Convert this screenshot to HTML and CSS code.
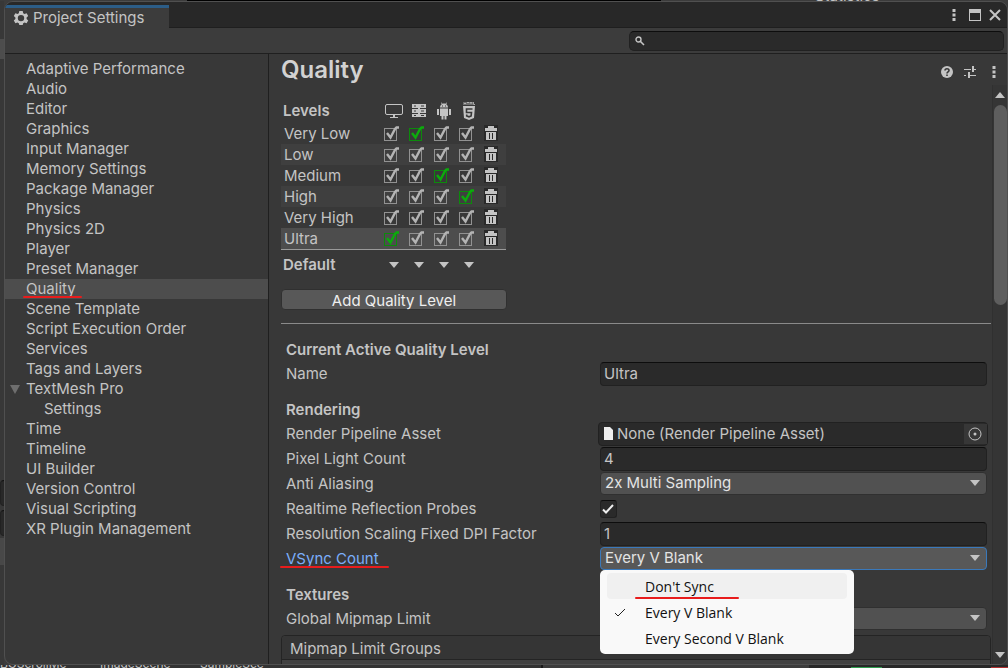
FILE: index.html
```html
<!DOCTYPE html>
<html lang="en">
<head>
    <meta charset="UTF-8">
    <meta name="viewport" content="width=device-width, initial-scale=1.0">
    <title>Project Settings</title>
    <link rel="stylesheet" href="styles.css">
</head>
<body>

    <!-- shared icons -->
    <svg class="sprite">
        <symbol id="dots" viewBox="0 0 14 14">
            <path d="M5.500 1h3v3h-3zM5.500 5.500h3v3h-3zM5.500 10h3v3h-3z"/>
        </symbol>
        <symbol id="tick" viewBox="0 0 18 18">
            <path d="M5 8l3.500 4.500L13 4l1.500-1.500H17" fill="none" stroke="currentColor" stroke-width="2.400"/>
        </symbol>
        <symbol id="trash" viewBox="0 0 14 16">
            <path d="M4 1h6v2h3v3H1V3h3z"/>
            <path fill-rule="evenodd" d="M2 7h10v8H2zM5 8v6h1V8zM8 8v6h1V8z"/>
        </symbol>
    </svg>

    <div class="behind-top">
        <span class="dark"></span>
        <span class="stats">Statistics</span>
    </div>

    <div class="desk">
        <div class="behind-left">
            <span class="patch light"></span>
            <span class="patch field"></span>
            <span class="patch field"></span>
            <span class="patch light last"></span>
        </div>

        <div class="window">
            <header class="tabbar">
                <div class="tab">
                    <svg width="16" height="16" viewBox="0 0 16 16">
                        <path fill="#c4c4c4" fill-rule="evenodd" d="M6.300 1h3.400l.5 2.200 1.300.7 2.100-.6 1.600 2.800-1.600 1.500v1.300l1.600 1.500-1.600 2.800-2.100-.7-1.300.8L9.700 15H6.300l-.5-1.700-1.300-.8-2.100.7-1.600-2.800 1.600-1.500V7.600L.8 6.100l1.600-2.800 2.100.6 1.300-.7zM8 4.900a3.200 3.200 0 1 0 0 6.400 3.200 3.200 0 0 0 0-6.400z"/>
                    </svg>
                    <span>Project Settings</span>
                </div>
                <div class="window-buttons">
                    <button aria-label="Window menu"><svg width="14" height="14"><use href="#dots"/></svg></button>
                    <button aria-label="Maximize">
                        <svg width="12" height="12" viewBox="0 0 12 12"><path d="M0 0h12v12H0zM1 4v7h10V4z" fill-rule="evenodd"/></svg>
                    </button>
                    <button aria-label="Close">
                        <svg width="12" height="12" viewBox="0 0 12 12"><path d="M1 1l10 10M11 1L1 11" stroke="currentColor" stroke-width="2"/></svg>
                    </button>
                </div>
            </header>

            <div class="toolbar">
                <label class="search">
                    <svg width="10" height="10" viewBox="0 0 10 10">
                        <circle cx="3.500" cy="3.500" r="2.500" fill="none" stroke="#c4c4c4" stroke-width="1.400"/>
                        <path d="M5.500 5.500L9 9" stroke="#c4c4c4" stroke-width="1.600"/>
                    </svg>
                    <input type="text" aria-label="Search">
                </label>
            </div>

            <div class="content">
                <nav class="sidebar">
                    <a href="#">Adaptive Performance</a>
                    <a href="#">Audio</a>
                    <a href="#">Editor</a>
                    <a href="#">Graphics</a>
                    <a href="#">Input Manager</a>
                    <a href="#">Memory Settings</a>
                    <a href="#">Package Manager</a>
                    <a href="#">Physics</a>
                    <a href="#">Physics 2D</a>
                    <a href="#">Player</a>
                    <a href="#">Preset Manager</a>
                    <a href="#" class="selected"><span class="marked">Quality</span></a>
                    <a href="#">Scene Template</a>
                    <a href="#">Script Execution Order</a>
                    <a href="#">Services</a>
                    <a href="#">Tags and Layers</a>
                    <a href="#" class="parent">TextMesh Pro</a>
                    <a href="#" class="child">Settings</a>
                    <a href="#">Time</a>
                    <a href="#">Timeline</a>
                    <a href="#">UI Builder</a>
                    <a href="#">Version Control</a>
                    <a href="#">Visual Scripting</a>
                    <a href="#">XR Plugin Management</a>
                </nav>

                <main class="main">
                    <div class="page-head">
                        <h1>Quality</h1>
                        <div class="head-buttons">
                            <button aria-label="Help">
                                <svg width="12" height="12" viewBox="0 0 12 12">
                                    <circle cx="6" cy="6" r="6"/>
                                    <path d="M4 4.600C4 2.200 8 2.200 8 4.500 8 6 6 5.800 6 7.500M6 8.500V10" fill="none" stroke="#383838" stroke-width="1.600"/>
                                </svg>
                            </button>
                            <button aria-label="Presets">
                                <svg width="12" height="12" viewBox="0 0 12 12">
                                    <path d="M0 3h7v1H0zM8 0h2v6H8zM10 3h2v1h-2zM0 9h2v1H0zM4 6h2v6H4zM6 9h6v1H6z"/>
                                </svg>
                            </button>
                            <button aria-label="More"><svg width="14" height="14"><use href="#dots"/></svg></button>
                        </div>
                    </div>

                    <div class="scroll">
                        <div class="page">
                            <table class="levels">
                                <thead>
                                    <tr>
                                        <th class="name">Levels</th>
                                        <th>
                                            <svg width="18" height="16" viewBox="0 0 18 16" aria-label="Desktop">
                                                <rect x="0.500" y="1.500" width="17" height="10" rx="1.500" fill="none" stroke="#c4c4c4"/>
                                                <path d="M8 12h2v2h3v1H5v-1h3z"/>
                                            </svg>
                                        </th>
                                        <th>
                                            <svg width="16" height="16" viewBox="0 0 16 16" aria-label="Server">
                                                <path fill-rule="evenodd" d="M1 1h14v4H1zM3 2.500v1h2v-1zM10 2.500v1h3v-1zM1 6h14v4H1zM3 7.500v1h2v-1zM10 7.500v1h3v-1zM1 11h14v3H1zM3 12v1h2v-1zM10 12v1h3v-1zM7 5h2v1H7zM7 10h2v1H7z"/>
                                            </svg>
                                        </th>
                                        <th>
                                            <svg width="16" height="18" viewBox="0 0 16 18" aria-label="Android">
                                                <path d="M4 5.500C4 3.800 4.900 2.700 5.800 2.200L5 .7l.6-.3.9 1.400c1-.3 2-.3 3 0l.9-1.400.6.3-.8 1.500c.9.500 1.800 1.600 1.800 3.300zM4 6.500h8V14h-1.500v3.500h-2V14h-1v3.500h-2V14H4zM1 7h2v6H1zM13 7h2v6h-2z"/>
                                                <path d="M6 3.500h1v1H6zM9 3.500h1v1H9z" fill="#383838"/>
                                            </svg>
                                        </th>
                                        <th>
                                            <svg width="14" height="18" viewBox="0 0 14 18" aria-label="WebGL">
                                                <path d="M2 0v3M4 0v3M2 1.500h2M5 .5h2M6 0v3M8 3V0l1 1.500L10 0v3M11.500 0v2.500H13" fill="none" stroke="#c4c4c4" stroke-width="0.800"/>
                                                <path d="M1 4h12l-1 12-5 2-5-2z"/>
                                                <path d="M10.500 7h-6v3.500h5l-.4 3.500-2.100.8-2.300-.8V12.500" fill="none" stroke="#383838" stroke-width="1.600"/>
                                            </svg>
                                        </th>
                                        <th></th>
                                    </tr>
                                </thead>
                                <tbody id="levelRows"></tbody>
                                <tfoot>
                                    <tr>
                                        <th class="name">Default</th>
                                        <th><button class="drop" aria-label="Desktop default"></button></th>
                                        <th><button class="drop" aria-label="Server default"></button></th>
                                        <th><button class="drop" aria-label="Android default"></button></th>
                                        <th><button class="drop" aria-label="WebGL default"></button></th>
                                        <th></th>
                                    </tr>
                                </tfoot>
                            </table>

                            <button class="add">Add Quality Level</button>
                            <hr>

                            <form class="form">
                                <h2>Current Active Quality Level</h2>
                                <div class="row">
                                    <label for="name">Name</label>
                                    <input type="text" class="field" id="name" value="Ultra">
                                </div>

                                <h2>Rendering</h2>
                                <div class="row">
                                    <label for="asset">Render Pipeline Asset</label>
                                    <div class="object">
                                        <svg width="9" height="13" viewBox="0 0 9 13"><path fill="#eee" d="M0 0h6l3 3v10H0z"/></svg>
                                        <input type="text" id="asset" value="None (Render Pipeline Asset)" readonly>
                                        <button type="button" class="pick" aria-label="Select asset">
                                            <svg width="14" height="14" viewBox="0 0 14 14">
                                                <circle cx="7" cy="7" r="6" fill="none" stroke="#c4c4c4"/>
                                                <circle cx="7" cy="7" r="1.500"/>
                                            </svg>
                                        </button>
                                    </div>
                                </div>
                                <div class="row">
                                    <label for="lights">Pixel Light Count</label>
                                    <input type="text" class="field" id="lights" value="4">
                                </div>
                                <div class="row">
                                    <label for="aa">Anti Aliasing</label>
                                    <div class="select">
                                        <select id="aa"><option>2x Multi Sampling</option></select>
                                    </div>
                                </div>
                                <div class="row">
                                    <label for="probes">Realtime Reflection Probes</label>
                                    <span class="check">
                                        <input type="checkbox" id="probes" checked>
                                        <svg width="12" height="12" viewBox="0 0 12 12"><path d="M1 6.500l3 3L11 2" fill="none" stroke="#eee" stroke-width="2"/></svg>
                                    </span>
                                </div>
                                <div class="row">
                                    <label for="dpi">Resolution Scaling Fixed DPI Factor</label>
                                    <input type="text" class="field" id="dpi" value="1">
                                </div>
                                <div class="row">
                                    <label for="vsync" class="active"><span class="marked">VSync Count</span></label>
                                    <div class="select open">
                                        <select id="vsync">
                                            <option>Don't Sync</option>
                                            <option selected>Every V Blank</option>
                                            <option>Every Second V Blank</option>
                                        </select>
                                        <div class="menu">
                                            <button type="button" class="hover"><span class="marked">Don't Sync</span></button>
                                            <button type="button">
                                                <svg width="12" height="10" viewBox="0 0 12 10"><path d="M1 5l3 3 7-7" fill="none" stroke="#222"/></svg>
                                                Every V Blank
                                            </button>
                                            <button type="button">Every Second V Blank</button>
                                        </div>
                                    </div>
                                </div>

                                <h2>Textures</h2>
                                <div class="row">
                                    <label for="mipmap">Global Mipmap Limit</label>
                                    <div class="select">
                                        <select id="mipmap"><option></option></select>
                                    </div>
                                </div>
                            </form>

                            <div class="group">
                                <div class="group-title">Mipmap Limit Groups</div>
                            </div>
                        </div>

                        <div class="scrollbar">
                            <span class="arrow up"></span>
                            <div class="track"><div class="thumb"></div></div>
                            <span class="arrow"></span>
                        </div>
                    </div>
                </main>
            </div>
        </div>
    </div>

    <div class="behind-bottom">
        <div class="assets">
            <span>BGScrollMe</span>
            <span>ImageScene</span>
            <span>SampleSce</span>
        </div>
        <div class="strip"></div>
        <div class="timeline"><i class="green"></i><i class="red"></i></div>
    </div>

    <script>
        // "def" is the platform column that uses the level by default
        const levels = [
            { name: 'Very Low', def: 1 },
            { name: 'Low', def: -1 },
            { name: 'Medium', def: 2 },
            { name: 'High', def: 3 },
            { name: 'Very High', def: -1 },
            { name: 'Ultra', def: 0 }
        ];
        const platforms = ['Desktop', 'Server', 'Android', 'WebGL'];

        document.getElementById('levelRows').innerHTML = levels.map(level => {
            const ticks = platforms.map((platform, i) => `
                <td><label class="tick ${level.def === i ? 'default' : ''}">
                    <input type="checkbox" checked aria-label="${level.name} on ${platform}">
                    <svg width="18" height="18"><use href="#tick"/></svg>
                </label></td>`).join('');
            return `<tr class="${level.name === 'Ultra' ? 'current' : ''}">
                <td class="name">${level.name}</td>${ticks}
                <td><button class="trash" aria-label="Delete ${level.name}"><svg width="14" height="16"><use href="#trash"/></svg></button></td>
            </tr>`;
        }).join('');
    </script>
</body>
</html>
```
FILE: styles.css
```css
* {
    padding: 0;
    margin: 0;
    box-sizing: border-box;
}

body {
    height: 100vh;
    display: flex;
    flex-direction: column;
    overflow: hidden;
    background-color: #3c3c3c;
    color: #c4c4c4;
    font-family: Inter, sans-serif;
    font-size: 15px;
    line-height: 20px;
}

svg {
    display: block;
    flex: none;
    fill: #c4c4c4;
}

button {
    background: none;
    border: none;
    color: inherit;
    font: inherit;
}

input, select {
    appearance: none;
    min-width: 0;
    border: none;
    outline: none;
    background: none;
    color: inherit;
    font: inherit;
}

a {
    color: inherit;
    text-decoration: none;
}

.sprite {
    display: none;
}

/* editor behind the window */
.behind-top {
    height: 1px;
    display: flex;
    align-items: flex-end;
    overflow: hidden;
    padding-left: 187px;
}

.behind-top .dark {
    width: 474px;
    height: 1px;
    background-color: #000;
}

.behind-top .stats {
    margin-left: 154px;
    line-height: 10px;
}

.desk {
    flex: 1;
    min-height: 0;
    display: flex;
}

.behind-left {
    width: 4px;
    background-color: #383838;
    padding-top: 38px;
}

.patch {
    display: block;
    height: 20px;
    background-color: #4d4d4d;
}

.patch.field {
    height: 26px;
    margin-top: 4px;
    background-color: #282828;
    border-top: 1px solid #111;
}

.patch.light + .patch.field {
    margin-top: 421px;
}

.patch.last {
    height: 27px;
    margin-top: 2px;
    background-color: #484848;
}

.behind-bottom {
    height: 3px;
    display: flex;
    overflow: hidden;
    background-color: #333;
}

.assets {
    width: 541px;
    display: flex;
    align-items: flex-end;
    font-size: 12px;
    line-height: 8px;
}

.assets span {
    width: 100px;
}

.strip {
    flex: 1;
    border-left: 2px solid #191919;
    background-color: #3c3c3c;
}

.timeline {
    width: 199px;
    display: flex;
    align-items: flex-end;
    background-color: #282828;
}

.timeline i {
    height: 1px;
}

.timeline .green {
    width: 31px;
    margin-left: 42px;
    background-color: #2e9e4f;
}

.timeline .red {
    width: 17px;
    margin-left: auto;
    background-color: #b03030;
}

/* window */
.window {
    flex: 1;
    min-width: 0;
    display: flex;
    flex-direction: column;
    overflow: hidden;
    background-color: #383838;
    border: 1px solid #505050;
    border-radius: 9px;
}

.tabbar {
    height: 26px;
    flex: none;
    display: flex;
    justify-content: space-between;
    align-items: flex-end;
    background-color: #282828;
    box-shadow: inset 0 -1px #1f1f1f;
}

.tab {
    height: 23px;
    width: 164px;
    display: flex;
    align-items: center;
    gap: 4px;
    padding-left: 8px;
    background-color: #3c3c3c;
    border-top: 3px solid #2c5d87;
}

.window-buttons {
    display: flex;
    align-items: center;
    gap: 8px;
    height: 26px;
    padding-right: 6px;
}

.toolbar {
    height: 26px;
    flex: none;
    padding: 3px 3px 0 0;
    background-color: #3c3c3c;
    border-bottom: 1px solid #1f1f1f;
}

.search {
    width: 375px;
    height: 20px;
    display: flex;
    align-items: center;
    gap: 4px;
    margin-left: auto;
    padding: 0 5px;
    background-color: #2a2a2a;
    border: 1px solid #212121;
    border-top-color: #0d0d0d;
    border-radius: 5px;
}

.search input {
    flex: 1;
}

.content {
    flex: 1;
    min-height: 0;
    display: flex;
}

.sidebar {
    width: 264px;
    flex: none;
    padding-top: 5px;
    border-right: 1px solid #1f1f1f;
}

.sidebar a {
    display: block;
    height: 20px;
    padding-left: 21px;
}

.sidebar a.selected {
    background-color: #4d4d4d;
}

.sidebar a.parent {
    display: flex;
    align-items: center;
    gap: 6px;
    padding-left: 5px;
}

.sidebar a.parent::before {
    content: "";
    border: 5px solid transparent;
    border-top: 9px solid #6e6e6e;
    border-bottom: none;
}

.sidebar a.child {
    padding-left: 39px;
}

/* red marker line */
.marked {
    position: relative;
}

.marked::after {
    content: "";
    position: absolute;
    left: -3px;
    right: -6px;
    bottom: 0;
    height: 2px;
    border-radius: 1px;
    background-color: #e81c1c;
}

.main {
    flex: 1;
    min-width: 0;
    display: flex;
    flex-direction: column;
}

.page-head {
    height: 31px;
    flex: none;
    display: flex;
    justify-content: space-between;
    align-items: center;
    padding: 0 6px 0 12px;
}

h1 {
    font-size: 24px;
    font-weight: 600;
    line-height: 31px;
    color: #d2d2d2;
}

.head-buttons {
    display: flex;
    align-items: center;
    gap: 11px;
    padding-top: 5px;
}

.scroll {
    flex: 1;
    min-height: 0;
    display: flex;
}

.page {
    flex: 1;
    min-width: 0;
    overflow: hidden;
    padding: 13px 0 0 12px;
}

/* levels table */
.levels {
    width: 225px;
    table-layout: fixed;
    border-collapse: separate;
    border-spacing: 0;
}

.levels th, .levels td {
    width: 25px;
    height: 21px;
    text-align: left;
    line-height: 20px;
    font-weight: 600;
}

.levels .name {
    width: 100px;
    padding-left: 2px;
}

.levels td.name {
    padding-left: 3px;
}

.levels td {
    font-weight: 400;
}

.levels thead th {
    height: 25px;
}

.levels thead svg {
    margin: 0 auto;
}

.levels tfoot th {
    height: 30px;
    text-align: center;
    border-top: 1px solid #9a9a9a;
}

.levels tfoot th.name {
    text-align: left;
}

.levels tbody tr:nth-child(even) {
    background-color: #3f3f3f;
}

.levels tbody tr.current {
    background-color: #4d4d4d;
}

.tick {
    display: block;
    position: relative;
    width: 18px;
    height: 18px;
    margin-left: 2px;
    color: #b4b4b4;
}

.tick input {
    display: block;
    position: absolute;
    left: 1px;
    top: 3px;
    width: 13px;
    height: 13px;
    border: 1px solid #929292;
}

.tick svg {
    position: absolute;
    left: -1px;
    top: 0;
}

.tick.default {
    color: #0cab0c;
}

.tick.default input {
    border-color: #0c8a0c;
}

.trash {
    display: block;
    margin: 0 0 2px 3px;
    background-color: #292929;
}

.drop {
    display: inline-block;
    border: 5px solid transparent;
    border-top: 6px solid #c4c4c4;
    border-bottom: none;
    vertical-align: middle;
}

.add {
    display: block;
    width: 226px;
    height: 21px;
    margin-top: 10px;
    padding-top: 1px;
    line-height: 20px;
    background-color: #585858;
    color: #eee;
    border: 1px solid #303030;
    border-radius: 4px;
}

hr {
    margin: 13px 1px 2px 0;
    border: none;
    border-top: 1px solid #8a8a8a;
}

/* settings form */
.form {
    padding: 0 5px;
}

h2 {
    height: 35px;
    padding-top: 13px;
    font-size: 15px;
    font-weight: 600;
    line-height: 22px;
}

.row {
    height: 25px;
    display: flex;
    align-items: center;
}

.row > label {
    width: 314px;
    flex: none;
}

.row > label.active {
    color: #7baefa;
}

.row .active .marked::after {
    left: -6px;
    right: -10px;
}

.field, .object {
    flex: 1;
    height: 24px;
    padding: 0 3px;
    background-color: #2a2a2a;
    border: 1px solid #212121;
    border-top-color: #0d0d0d;
    border-radius: 4px;
}

.object {
    display: flex;
    align-items: center;
    gap: 4px;
    margin: 0 -1px 0 -2px;
    padding: 0 0 0 5px;
    border-top-color: #212121;
}

.object input {
    flex: 1;
}

.pick {
    width: 23px;
    height: 20px;
    padding-left: 4px;
    background-color: #373737;
}

.select {
    position: relative;
    flex: 1;
}

.select select {
    display: block;
    width: 100%;
    height: 23px;
    padding: 0 0 2px 4px;
    background-color: #515151;
    color: #e4e4e4;
    border: 1px solid #303030;
    border-radius: 4px;
}

.select::after {
    content: "";
    position: absolute;
    right: 7px;
    top: 8px;
    border: 5px solid transparent;
    border-top: 6px solid #c4c4c4;
    border-bottom: none;
}

.select.open select {
    background-color: #585858;
    border-color: #3a79bb;
}

.menu {
    position: absolute;
    left: 0;
    top: 100%;
    z-index: 1;
    width: 254px;
    padding: 3px 7px;
    background-color: #f9f9f9;
    border-radius: 5px;
    font-family: "Open Sans", sans-serif;
    font-size: 14px;
    color: #111;
}

.menu button {
    display: flex;
    align-items: center;
    width: 100%;
    height: 26px;
    padding: 2px 0 0 38px;
    border-radius: 4px;
}

.menu button.hover {
    background-color: #f0f0f0;
}

.menu svg {
    margin: 0 19px 0 -31px;
}

.menu .marked::after {
    left: -10px;
    right: -25px;
    bottom: -2px;
}

.check {
    position: relative;
    width: 17px;
    height: 18px;
}

.check input {
    display: block;
    width: 17px;
    height: 18px;
    background-color: #2a2a2a;
    border: 1px solid #212121;
    border-top-color: #0d0d0d;
    border-radius: 3px;
}

.check svg {
    position: absolute;
    left: 2px;
    top: 3px;
}

.group {
    margin: 4px 1px 0 0;
    height: 60px;
    background-color: #414141;
    border: 1px solid #242424;
    border-radius: 4px;
}

.group-title {
    height: 24px;
    padding-left: 8px;
    line-height: 26px;
    background-color: #353535;
    border-bottom: 1px solid #242424;
    border-radius: 4px 4px 0 0;
}

.scrollbar {
    width: 15px;
    flex: none;
    display: flex;
    flex-direction: column;
    align-items: center;
    padding: 7px 0 6px;
    background-color: #353535;
    border-left: 1px solid #303030;
}

.track {
    flex: 1;
    width: 13px;
    padding: 7px 0;
}

.thumb {
    height: 37%;
    border-radius: 7px;
    background-color: #5e5e5e;
}

.arrow {
    border: 5px solid transparent;
    border-top: 6px solid #c4c4c4;
    border-bottom: none;
}

.arrow.up {
    border-top: none;
    border-bottom: 6px solid #c4c4c4;
}
```
